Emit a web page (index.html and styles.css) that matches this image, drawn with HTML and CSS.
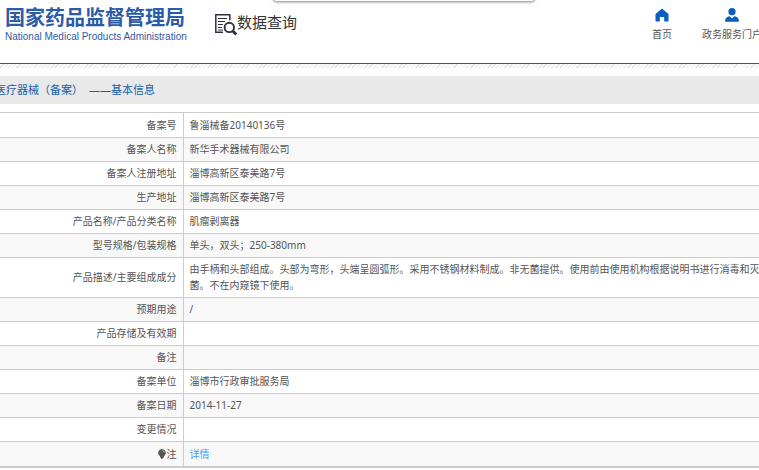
FILE: index.html
```html
<!DOCTYPE html>
<html lang="zh-CN">
<head>
<meta charset="utf-8">
<title>国家药品监督管理局 数据查询</title>
<link rel="stylesheet" href="styles.css">
</head>
<body>
<div class="popover"></div>
<header class="header">
  <a class="brand" href="#">
    <span class="brand-cn">国家药品监督管理局</span>
    <span class="brand-en">National Medical Products Administration</span>
  </a>
  <a class="search" href="#">
    <svg class="search-icon" viewBox="0 0 22 22" fill="none" stroke="#302f42">
      <path d="M8 18.2H.8V.8h14v5.4" stroke-width="1.5"/>
      <path d="M3 4.5h9M3 7.5h7M3 10.5h5M3 13.5h4M3 16h5" stroke-width="1.2"/>
      <circle cx="14.3" cy="13.4" r="4.7" stroke-width="1.9"/>
      <path d="M17.8 17l3.4 3.4" stroke-width="2.8"/>
    </svg>
    <span>数据查询</span>
  </a>
  <nav class="nav">
    <a class="nav-link" href="#">
      <svg class="nav-icon" viewBox="0 0 14 14"><path fill="#0a5fbe" d="M7 .4L.5 6v7q0 .6.6.6h3.7V9h4.4v4.6h3.7q.6 0 .6-.6V6z"/></svg>
      <span>首页</span>
    </a>
    <a class="nav-link" href="#">
      <svg class="nav-icon" viewBox="0 0 14 14"><circle cx="7" cy="3.7" r="3.6" fill="#0a5fbe"/><path fill="#0a5fbe" d="M0 13.8q0-5 4.6-5.6L7 10.4l2.4-2.2Q14 8.8 14 13.8z"/></svg>
      <span>政务服务门户</span>
    </a>
  </nav>
</header>
<div class="hatch"></div>
<main class="content">
  <h1 class="title"><span>医疗器械（备案）</span><span>——基本信息</span></h1>
  <table class="info">
    <tbody>
      <tr><th scope="row">备案号</th><td>鲁淄械备20140136号</td></tr>
      <tr><th scope="row">备案人名称</th><td>新华手术器械有限公司</td></tr>
      <tr><th scope="row">备案人注册地址</th><td>淄博高新区泰美路7号</td></tr>
      <tr><th scope="row">生产地址</th><td>淄博高新区泰美路7号</td></tr>
      <tr><th scope="row">产品名称/产品分类名称</th><td>肌瘤剥离器</td></tr>
      <tr><th scope="row">型号规格/包装规格</th><td>单头，双头；250-380mm</td></tr>
      <tr><th scope="row">产品描述/主要组成成分</th><td>由手柄和头部组成。头部为弯形，头端呈圆弧形。采用不锈钢材料制成。非无菌提供。使用前由使用机构根据说明书进行消毒和灭菌。不在内窥镜下使用。</td></tr>
      <tr><th scope="row">预期用途</th><td>/</td></tr>
      <tr><th scope="row">产品存储及有效期</th><td></td></tr>
      <tr><th scope="row">备注</th><td></td></tr>
      <tr><th scope="row">备案单位</th><td>淄博市行政审批服务局</td></tr>
      <tr><th scope="row">备案日期</th><td>2014-11-27</td></tr>
      <tr><th scope="row">变更情况</th><td></td></tr>
      <tr><th scope="row"><svg class="bulb" viewBox="0 0 8 10"><path fill="#555" d="M4 0a3.8 3.8 0 0 0-2.3 6.8L2.8 9.2Q4 10.4 5.2 9.2L6.3 6.8A3.8 3.8 0 0 0 4 0z"/><path d="M4.4 1.6q1.6.2 1.8 1.8" fill="none" stroke="#ddd" stroke-width=".8"/></svg>注</th><td><a class="detail" href="#">详情</a></td></tr>
    </tbody>
  </table>
</main>
</body>
</html>
```
FILE: styles.css
```css
* {
  box-sizing: border-box;
}

body {
  margin: 0;
  overflow: hidden;
  background: #fff;
  color: #555;
  font: 10px/16px "Noto Sans", "Noto Sans CJK SC", sans-serif;
}

a {
  color: inherit;
  text-decoration: none;
}

.popover {
  position: absolute;
  top: -8px;
  left: 36%;
  width: 262px;
  height: 9px;
  border-radius: 4px;
  background: #fff;
  box-shadow: 0 1px 3px rgba(0, 0, 0, 0.5);
}

.header {
  display: flex;
  align-items: flex-start;
  height: 64px;
  padding: 6px 0 0 5px;
  border-bottom: 1px solid #1b6088;
}

.brand {
  display: flex;
  flex-direction: column;
  flex: none;
  width: 210px;
  color: #2c5ca8;
  white-space: nowrap;
}

.brand-cn {
  font-size: 20px;
  font-weight: 700;
  line-height: 24px;
}

.brand-en {
  font-family: "Liberation Sans", sans-serif;
  font-size: 10px;
  line-height: 14px;
}

.search {
  display: flex;
  flex: none;
  padding-top: 6px;
  color: #333;
  font-size: 15px;
  line-height: 20px;
}

.search-icon {
  width: 22px;
  height: 22px;
  margin-top: 2px;
}

.nav {
  display: flex;
  flex: none;
  gap: 30px;
  margin: 2px -3px 0 auto;
}

.nav-link {
  display: flex;
  flex-direction: column;
  align-items: center;
  gap: 4px;
}

.nav-icon {
  width: 14px;
  height: 14px;
}

.hatch {
  height: 4px;
  background: repeating-linear-gradient(135deg, #fff 0 2px, #e2e2e2 2px 3px);
}

.content {
  margin: 8px -8px 0 -5px;
}

.title {
  display: flex;
  gap: 6px;
  margin: 0 0 8px;
  background: #e9e9e9;
  color: #1660a8;
  font-size: 11px;
  font-weight: 400;
  line-height: 28px;
}

.info {
  width: 100%;
  border-collapse: collapse;
  border-top: 1px solid #ccc;
  border-bottom: 2px solid #ccc;
  table-layout: fixed;
}

.info tr:nth-child(even) {
  background: #f8f8f8;
}

.info th,
.info td {
  height: 24px;
  padding: 3px 0 4px 6px;
  border-bottom: 1px solid #ccc;
  font-weight: 400;
  text-align: left;
}

.info th {
  width: 188px;
  padding: 3px 6px 4px 0;
  border-right: 1px solid #ccc;
  text-align: right;
}

.info tr:first-child > * {
  padding-top: 4px;
  height: 25px;
}

.info tr:last-child > * {
  padding-top: 4px;
  border-bottom-width: 2px;
}

.bulb {
  width: 8px;
  height: 10px;
  margin-right: 1px;
  vertical-align: -1px;
}

.detail {
  color: #409eff;
}
```
